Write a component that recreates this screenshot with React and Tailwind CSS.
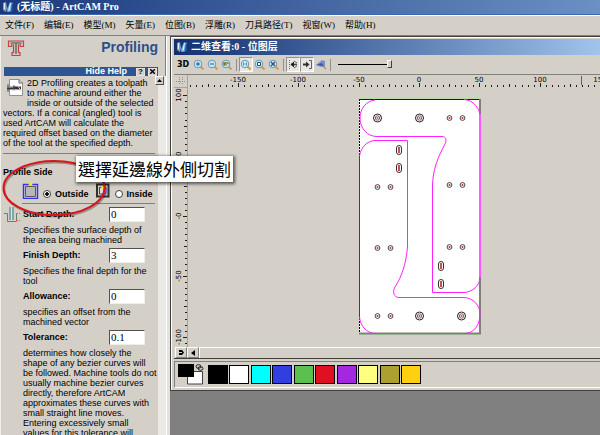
import React from 'react';

const MENU = ['文件(F)', '编辑(E)', '模型(M)', '矢量(E)', '位图(B)', '浮雕(R)', '刀具路径(T)', '视窗(W)', '帮助(H)'];

const SWATCHES = [
  ['Black', 'bg-black'],
  ['White', 'bg-white'],
  ['Cyan', 'bg-[#00ffff]'],
  ['Blue', 'bg-[#3040e0]'],
  ['Green', 'bg-[#5cc050]'],
  ['Red', 'bg-[#e01020]'],
  ['Purple', 'bg-[#a428e0]'],
  ['Light yellow', 'bg-[#ffff80]'],
  ['Olive', 'bg-[#aca030]'],
  ['Amber', 'bg-[#ffd010]'],
];

const FIELDS = [
  { id: 'start', label: 'Start Depth:', value: '0', lines: ['Specifies the surface depth of', 'the area being machined'] },
  { id: 'finish', label: 'Finish Depth:', value: '3', lines: ['Specifies the final depth for the', 'tool'] },
  { id: 'allowance', label: 'Allowance:', value: '0', lines: ['specifies an offset from the', 'machined vector'] },
  {
    id: 'tolerance',
    label: 'Tolerance:',
    value: '0.1',
    lines: [
      'determines how closely the',
      'shape of any bezier curves will',
      'be followed. Machine tools do not',
      'usually machine bezier curves',
      'directly, therefore ArtCAM',
      'approximates these curves with',
      'small straight line moves.',
      'Entering excessively small',
      'values for this tolerance will',
    ],
  },
];

const SERIF = "font-['Liberation_Serif','Noto_Sans_CJK_SC',serif]";

function AppIcon() {
  return (
    <svg width="12" height="12" viewBox="0 0 12 12" className="shrink-0" aria-hidden="true">
      <path d="M1 2 L4 1 L5 7 L4 11 L1 9 Z" fill="#8fa0b4" />
      <path d="M2 2 L3 2 L3 8 L2 8 Z" fill="#e4ecf4" />
      <path d="M5 8 L8 1 L11 2 L11 9 L8 11 L5 11 Z" fill="#4f9cd8" />
      <path d="M8 2 L9 2 L8 9 L6 10 Z" fill="#d8f0fc" />
      <path d="M10 3 L11 3 L11 9 L9 10 Z" fill="#1c4c8c" />
    </svg>
  );
}

function Lens({ kind }) {
  return (
    <svg width="12" height="12" viewBox="0 0 12 12" aria-hidden="true">
      <path d="M7.5 7.5 L10.5 10.5" stroke="#d89a38" strokeWidth="2" />
      <circle cx="5" cy="5" r="3.8" fill="#c4e8f6" stroke="#6898b8" strokeWidth="1" />
      {kind === 'in' && <path d="M3 5 H7 M5 3 V7" stroke="#1c5484" strokeWidth="1" />}
      {kind === 'out' && <path d="M3 5 H7" stroke="#1c5484" strokeWidth="1" />}
      {kind === 'prev' && <path d="M3 3 V6 H6 M3.3 5.5 Q5 2 7.5 5" fill="none" stroke="#806810" strokeWidth="1.2" />}
      {kind === 'one' && <path d="M3.5 3.5 V6.5 M6.5 3.5 V6.5 M5 4 V4.5 M5 5.5 V6" stroke="#3c7898" strokeWidth="0.8" />}
      {kind === 'box' && <path d="M3.5 3.5 H6.5 V6.5 H3.5 Z" fill="#fff" stroke="#28506c" strokeWidth="1" />}
      {kind === 'fit' && <path d="M3 3 L7 7 M7 3 L3 7" stroke="#28506c" strokeWidth="1.3" />}
    </svg>
  );
}

function ToolButton({ label, pressed, children }) {
  return (
    <button
      type="button"
      aria-label={label}
      className={
        pressed
          ? 'flex h-[15px] w-[14px] items-center justify-center border border-t-[#909090] border-l-[#909090] border-r-white border-b-white bg-[#e8e6e2]'
          : 'flex h-[15px] w-[14px] items-center justify-center'
      }
    >
      {children}
    </button>
  );
}

function Separator() {
  return <span className="mx-[2px] h-3 w-px shrink-0 bg-[#909090]" />;
}

function Toolbar() {
  return (
    <div className="flex h-[19px] shrink-0 items-center pl-[3px]">
      <button type="button" className="w-[15px] shrink-0 text-left font-['DejaVu_Sans',sans-serif] text-[8px] leading-none font-bold">
        3D
      </button>
      <ToolButton label="Zoom in"><Lens kind="in" /></ToolButton>
      <ToolButton label="Zoom out"><Lens kind="out" /></ToolButton>
      <ToolButton label="Previous zoom"><Lens kind="prev" /></ToolButton>
      <Separator />
      <ToolButton label="Zoom 1:1" pressed><Lens kind="one" /></ToolButton>
      <ToolButton label="Zoom to page"><Lens kind="box" /></ToolButton>
      <ToolButton label="Zoom to objects"><Lens kind="fit" /></ToolButton>
      <Separator />
      <ToolButton label="Bitmap on" pressed>
        <svg width="11" height="11" viewBox="0 0 11 11" aria-hidden="true">
          <path d="M1.5 1 V10" stroke="#707070" strokeDasharray="1 1" />
          <path d="M3 5.5 H9" stroke="#404040" strokeWidth="1.6" />
          <path d="M2.500 5.500 L6 2.500 V8.500 Z" fill="#202020" />
          <path d="M6 2 L9 4 M6 9 L9 7" stroke="#606060" />
        </svg>
      </ToolButton>
      <ToolButton label="Vectors on" pressed>
        <svg width="11" height="11" viewBox="0 0 11 11" aria-hidden="true">
          <path d="M1 4.500 H4 V2.500 L7.500 5.500 L4 8.500 V6.500 H1 Z" fill="#303030" />
          <path d="M7 1.5 H9.5 V9.5 H7" fill="none" stroke="#606060" />
        </svg>
      </ToolButton>
      <ToolButton label="Preview">
        <svg width="12" height="11" viewBox="0 0 12 11" aria-hidden="true">
          <path d="M1 6 L7 1 L10 2 V8 L6 8 Z" fill="#7890c8" />
          <path d="M1 6 L7 4 L9 7 Z" fill="#4058a0" />
          <path d="M8 7 L11 10" stroke="#c89040" strokeWidth="1.6" />
        </svg>
      </ToolButton>
      <Separator />
      <input
        type="range"
        aria-label="Bitmap contrast"
        defaultValue="100"
        className="ml-[5px] h-3 w-[54px] appearance-none bg-transparent [&::-webkit-slider-runnable-track]:h-px [&::-webkit-slider-runnable-track]:bg-black [&::-webkit-slider-thumb]:-mt-1 [&::-webkit-slider-thumb]:h-2 [&::-webkit-slider-thumb]:w-[5px] [&::-webkit-slider-thumb]:appearance-none [&::-webkit-slider-thumb]:border [&::-webkit-slider-thumb]:border-t-white [&::-webkit-slider-thumb]:border-l-white [&::-webkit-slider-thumb]:border-r-[#404040] [&::-webkit-slider-thumb]:border-b-[#404040] [&::-webkit-slider-thumb]:bg-[#d4d0c8]"
      />
    </div>
  );
}

const SCALE = 1.206;

function tickLength(n) {
  if (n % 10 === 0) return 4;
  return n % 5 === 0 ? 3 : 2;
}

function HorizontalRuler() {
  const ticks = [];
  for (let n = -38; n <= 30; n += 1) {
    const x = Math.round(419 + n * 5 * SCALE);
    if (x > 188) ticks.push([n, x]);
  }
  return (
    <svg width="412" height="13" viewBox="188 75 412 13" className="shrink-0" aria-hidden="true">
      {ticks.map(([n, x]) => (
        <rect key={n} x={x} y={87 - tickLength(n)} width="1" height={tickLength(n)} fill="#202020" />
      ))}
      {[-150, -100, -50, 0, 50, 100, 150].map((v) => (
        <text key={v} x={Math.round(419 + v * SCALE)} y="82" textAnchor="middle" className="font-['DejaVu_Sans',sans-serif] text-[7px]">
          {v}
        </text>
      ))}
      <rect x="581" y="76" width="1" height="9" fill="#606060" />
    </svg>
  );
}

function VerticalRuler() {
  const ticks = [];
  for (let n = -21; n <= 20; n += 1) ticks.push([n, Math.round(216 - n * 5 * SCALE)]);
  return (
    <svg width="13" height="259" viewBox="175 88 13 259" className="shrink-0" aria-hidden="true">
      {ticks.map(([n, y]) => (
        <rect key={n} x={187 - tickLength(n)} y={y} width={tickLength(n)} height="1" fill="#202020" />
      ))}
      {[100, 50, 0, -50, -100].map((v) => {
        const y = Math.round(216 - v * SCALE);
        return (
          <text key={v} x="181" y={y} transform={`rotate(-90 181 ${y})`} textAnchor="middle" className="font-['DejaVu_Sans',sans-serif] text-[7px]">
            {v === 0 ? '-0' : v}
          </text>
        );
      })}
      <rect x="187" y="88" width="1" height="259" fill="#a8a49c" />
    </svg>
  );
}

const SMALL_HOLES = [
  [449, 118], [462, 118], [377, 187], [390, 187], [449, 185], [462, 185],
  [377, 248], [390, 248], [449, 247], [462, 247], [377, 316], [390, 316],
];
const LARGE_HOLES = [[377, 118], [419, 118], [419, 316], [461, 316]];
const SLOTS = [[399, 150], [399, 168], [441, 266], [441, 284]];

function Workpiece() {
  return (
    <svg width="412" height="259" viewBox="188 88 412 259" role="img" aria-label="Part drawing">
      <rect x="359" y="98" width="122" height="237" fill="#b8dca8" />
      <rect x="359" y="99" width="122" height="235" fill="#fff" />
      <path d="M359.500 155 V317" stroke="#702070" />
      <path d="M359.500 99 V155 M359.500 318 V334" stroke="#000" strokeDasharray="2 1" />
      <path d="M359 99.500 H481" stroke="#301030" />
      <path d="M480 99 V114 M480 277 V334 M359 333.500 H481" stroke="#808080" strokeWidth="2" />
      <g fill="none" stroke="#ff20ff" strokeWidth="1">
        <path d="M375 100 C366 101 360 109 360 118 C360 128 367 136.500 377 136.500 H442 C446 136.500 447 140 445 144 C438 157 432.500 170 432.500 187 V292.500 H464 C473 292 480 285 480 277 V114 C478 106 472 100 464 99.500" />
        <path d="M359.500 156 C361 147 367 141 375 140.500 H407.500 V247 C406 264 402 276 395 287 C392 292 394 297.500 399 297.500 H464 C473 298 480 305 480 314 C480 325 474 333 465 333.500 H375 C366 333 360 325 359.500 317" />
        <path d="M480 114 V277" strokeWidth="2" strokeOpacity="0.5" />
      </g>
      {LARGE_HOLES.map(([x, y]) => (
        <g key={`${x}-${y}`} fill="none">
          <circle cx={x + 0.5} cy={y} r="4" stroke="#202020" />
          <circle cx={x + 0.5} cy={y} r="2.2" stroke="#703040" strokeWidth="0.8" />
          <circle cx={x + 0.5} cy={y} r="1" fill="#e04040" />
        </g>
      ))}
      {SMALL_HOLES.map(([x, y]) => (
        <g key={`${x}-${y}`}>
          <circle cx={x + 0.5} cy={y} r="2.4" fill="#fff" stroke="#303030" strokeWidth="0.9" />
          <circle cx={x + 0.5} cy={y} r="1" fill="#c03030" />
        </g>
      ))}
      {SLOTS.map(([x, y]) => (
        <g key={`${x}-${y}`}>
          <rect x={x - 2.5} y={y - 4.5} width="5" height="9" rx="2.5" fill="#fff" stroke="#303030" />
          <rect x={x - 1} y={y - 3} width="2" height="6" fill="#c85050" />
        </g>
      ))}
    </svg>
  );
}

function Palette() {
  return (
    <div className="mt-[2px] mr-[-4px] flex h-[27px] shrink-0 items-center border border-[#808080] border-b-white pl-[3px]">
      <svg width="26" height="21" viewBox="0 0 26 21" className="mr-1 shrink-0" role="img" aria-label="Primary and secondary colour">
        <path d="M9.500 7.500 H24.500 V20 H9.500 Z" fill="#fff" stroke="#404040" />
        <rect x="0" y="0" width="16" height="13" fill="#000" />
        <rect x="17" y="0" width="9" height="7" fill="#d4d0c8" />
        <ellipse cx="20.500" cy="2.500" rx="2.500" ry="1.800" fill="none" stroke="#202020" />
        <ellipse cx="22.500" cy="4.500" rx="2.500" ry="1.800" fill="none" stroke="#202020" />
      </svg>
      <div className="flex w-[213px] justify-between">
        {SWATCHES.map(([name, color]) => (
          <button key={name} type="button" aria-label={name} className={`h-[19px] w-5 border border-black ${color}`} />
        ))}
      </div>
    </div>
  );
}

function ViewWindow() {
  return (
    <section className="flex min-w-0 flex-1 flex-col bg-[#808080]">
      <div className="flex h-[355px] shrink-0 flex-col overflow-hidden border-t border-b border-l border-[#404040] bg-[#d4d0c8] pt-[2px] pl-[3px] shadow-[inset_1px_1px_0_#fff]">
        <div className="flex h-4 shrink-0 items-center gap-[3px] bg-linear-to-r from-[#12306f] to-[#a0c4ec] pl-[2px]">
          <AppIcon />
          <h2 className={`text-[10px] leading-none font-bold whitespace-nowrap text-white ${SERIF}`}>二维查看:0 - 位图层</h2>
        </div>
        <Toolbar />
        <div className="flex h-[14px] shrink-0 border-t border-[#808080]">
          <div className="flex h-[13px] w-[14px] shrink-0 items-center justify-center border-r border-b border-[#a8a49c]">
            <svg width="9" height="8" viewBox="0 0 9 8" aria-hidden="true">
              <path d="M0 4.500 H9 M3.500 0 V8 M6.500 0 V8" stroke="#909090" strokeDasharray="1 1" />
            </svg>
          </div>
          <HorizontalRuler />
        </div>
        <div className="flex h-[259px] shrink-0 pl-px">
          <VerticalRuler />
          <Workpiece />
        </div>
        <div className="flex h-3 shrink-0 border-b border-[#404040] pl-px">
          <button type="button" aria-label="Origin" className="flex h-[11px] w-3 items-center justify-center border border-[#808080] border-t-white border-l-white">
            <svg width="5" height="5" viewBox="0 0 5 5" aria-hidden="true"><path d="M0 0 H3 L5 2.500 L3 5 H0 V3 H3 V2 H0 Z" /></svg>
          </button>
          <button type="button" aria-label="Scroll left" className="flex h-[11px] w-3 items-center justify-center border border-[#808080] border-t-white border-l-white">
            <svg width="4" height="6" viewBox="0 0 4 6" aria-hidden="true"><path d="M4 0 V6 L0 3 Z" /></svg>
          </button>
          <div className="h-[11px] flex-1 border-t border-l border-white" />
        </div>
        <Palette />
      </div>
    </section>
  );
}

function SideIcon({ inside }) {
  return (
    <svg width="17" height="17" viewBox="0 0 17 17" className="shrink-0" aria-hidden="true">
      {inside ? (
        <>
          <path d="M3 2.500 H14.500 V14.500 H3 Z" fill="#d4d0c8" stroke="#303030" strokeWidth="2" />
          <path d="M5.500 5.500 H12 V12 H5.500 Z" fill="#e0e0e4" stroke="#3030e8" />
          <circle cx="9" cy="6" r="2" fill="#f8e820" />
        </>
      ) : (
        <>
          <path d="M1.500 2.500 H15.500 V16.500 H1.500 Z" fill="#d4d0c8" stroke="#3030ff" strokeWidth="1.400" />
          <path d="M3.500 4.500 H13.500 V14.500 H3.500 Z" fill="#b8b8b8" stroke="#585858" />
          <circle cx="8.500" cy="2" r="2" fill="#f0e820" />
        </>
      )}
    </svg>
  );
}

const RADIO =
  "m-0 mb-px h-2 w-2 shrink-0 appearance-none rounded-full border border-[#404040] bg-white checked:bg-[radial-gradient(circle,#000_0_1.5px,#fff_2px)]";

function ProfilingPanel() {
  return (
    <aside className="relative flex w-[166px] shrink-0 border-r border-[#808080] font-['Liberation_Sans',Arial,sans-serif] text-[9px] leading-[10px] text-black">
      <div className="flex w-[158px] shrink-0 flex-col border-l border-[#f0eeea]">
        <header className="flex h-[31px] shrink-0 items-start justify-between pt-[3px] pl-[6px]">
          <svg width="18" height="18" viewBox="0 0 18 18" aria-hidden="true">
            <path d="M1.500 2 H16.500 V7.500 H13.500 V6 H11.500 V13.500 H13 V16.500 H5 V13.500 H6.500 V6 H4.500 V7.500 H1.500 Z" fill="#c8c8c8" stroke="#c84040" strokeWidth="1.2" />
            <path d="M3.500 4 H14.500 M9 4 V15" stroke="#707070" strokeWidth="1.600" />
          </svg>
          <h1 className="text-[14px] leading-4 font-bold text-[#2b4f8c]">Profiling</h1>
        </header>
        <div className="ml-[3px] flex h-[9px] shrink-0 items-center justify-end bg-[#2d5594] leading-none font-bold text-white">
          <span className="mr-[9px]">Hide Help</span>
          <button type="button" aria-label="Help" className="mr-[3px] flex h-2 w-[9px] items-center justify-center border border-[#e4e2dc] bg-[#d4d0c8] text-[8px] leading-none text-black">?</button>
          <button type="button" aria-label="Close" className="mr-px flex h-2 w-[9px] items-center justify-center border border-[#e4e2dc] bg-[#d4d0c8]">
            <svg width="5" height="5" viewBox="0 0 5 5" aria-hidden="true"><path d="M0 0 L5 5 M5 0 L0 5" stroke="#000" strokeWidth="1.300" /></svg>
          </button>
        </div>
        <div className="mt-[2px] px-[2px] whitespace-nowrap">
          <div className="flex">
            <svg width="20" height="20" viewBox="0 0 20 20" className="mr-1 shrink-0" aria-hidden="true">
              <path d="M6.500 1.500 H16 L19.500 5 V17.500 H6.500 Z" fill="#fff" stroke="#909090" />
              <path d="M16 1.500 V5 H19.500" fill="none" stroke="#606060" />
              <path d="M4 10 H18" stroke="#303030" strokeWidth="3" />
              <path d="M4 9 H10 M8 12 H14 M15 8 L18 13" stroke="#d0d0d0" />
              <path d="M5 6 V14 M11 7 V12" stroke="#505050" />
            </svg>
            <p>2D Profiling creates a toolpath<br />to machine around either the<br />inside or outside of the selected</p>
          </div>
          <p>vectors. If a conical (angled) tool is<br />used ArtCAM will calculate the<br />required offset based on the diameter<br />of the tool at the specified depth.</p>
        </div>
        <hr className="mt-[5px] mr-[3px] ml-[2px] border-[#808080]" />
        <fieldset className="mt-[13px] shrink-0 pl-[2px]">
          <legend className="font-bold">Profile Side</legend>
          <div className="mt-1 flex h-[18px] items-end font-bold">
            <div className="ml-[19px] flex items-end gap-1">
              <SideIcon />
              <input id="outside" type="radio" name="side" defaultChecked className={RADIO} />
              <label htmlFor="outside">Outside</label>
            </div>
            <div className="ml-[5px] flex items-end gap-1">
              <SideIcon inside />
              <input id="inside" type="radio" name="side" className={RADIO} />
              <label htmlFor="inside">Inside</label>
            </div>
          </div>
        </fieldset>
        <hr className="mt-1 mr-[3px] ml-[21px] shrink-0 border-[#808080]" />
        <div className="flex pl-[3px]">
          <svg width="16" height="17" viewBox="0 0 16 17" className="mt-[3px] mr-[3px] shrink-0" aria-hidden="true">
            <path d="M0 6.500 H3.500 V14.500 H12.500 V6.500" fill="none" stroke="#707878" />
            <path d="M5 0 H10 V13 H5 Z" fill="#78a8a8" />
            <path d="M7.500 0 V13" stroke="#d8e8e8" />
            <path d="M12 6.500 H16 M12 13.500 H16" stroke="#e06060" strokeDasharray="2 1" />
          </svg>
          <div className="shrink-0 whitespace-nowrap">
            {FIELDS.map((f) => (
              <div key={f.id}>
                <div className="flex h-5 items-center">
                  <label htmlFor={f.id} className="w-[86px] font-bold">{f.label}</label>
                  <input
                    id={f.id}
                    type="text"
                    defaultValue={f.value}
                    className="h-[15px] w-9 border border-t-[#505050] border-l-[#505050] border-r-[#f0eeea] border-b-[#f0eeea] bg-white px-px font-['Liberation_Serif',serif] text-[11px] leading-none"
                  />
                </div>
                <p className="mt-px">
                  {f.lines.map((line) => (
                    <span key={line} className="block">{line}</span>
                  ))}
                </p>
              </div>
            ))}
          </div>
        </div>
      </div>
      <div className="mt-10 mr-[-3px] flex w-2 shrink-0 flex-col bg-[#ebe9e5]">
        <button type="button" aria-label="Scroll up" className="-ml-[3px] flex h-[9px] w-[9px] items-center justify-center border border-t-white border-r-[#505050] border-b-[#505050] border-l-white bg-[#d4d0c8]">
          <svg width="5" height="3" viewBox="0 0 5 3" aria-hidden="true"><path d="M0 3 H5 L2.500 0 Z" /></svg>
        </button>
      </div>
      <svg width="108" height="62" viewBox="0 0 108 62" className="pointer-events-none absolute top-[121px] left-0" aria-hidden="true">
        <ellipse cx="55" cy="32.500" rx="50.500" ry="27" fill="none" stroke="#000" strokeOpacity="0.3" strokeWidth="2" />
        <ellipse cx="54" cy="31" rx="50.500" ry="27" fill="none" stroke="#dc1418" strokeWidth="2" />
      </svg>
      <p className="absolute top-[120px] left-[76px] z-10 bg-white px-[2px] font-['Noto_Sans_CJK_TC',sans-serif] text-[17px] leading-[26px] whitespace-nowrap shadow-[1px_1px_3px_1px_rgba(0,0,0,0.6)]">
        選擇延邊線外側切割
      </p>
    </aside>
  );
}

export default function App() {
  return (
    <div className="flex h-screen flex-col overflow-hidden bg-[#d4d0c8]">
      <header className="flex h-[15px] shrink-0 items-center gap-[3px] border-b border-[#3c66b0] bg-linear-to-r from-[#1c387c] to-[#6c90c4] pl-[2px]">
        <AppIcon />
        <span className={`text-[10px] leading-none font-bold whitespace-nowrap text-white ${SERIF}`}>(无标题) - ArtCAM Pro</span>
      </header>
      <nav className={`flex h-[20px] shrink-0 items-center gap-[10px] border-t border-white pl-[5px] text-[9px] leading-none whitespace-nowrap text-black ${SERIF}`}>
        {MENU.map((m) => (
          <button key={m} type="button">{m}</button>
        ))}
      </nav>
      <main className="flex min-h-0 flex-1 border-t border-[#808080]">
        <ProfilingPanel />
        <div className="w-1 shrink-0 border-l border-white bg-[#e4e2dc]" />
        <ViewWindow />
      </main>
    </div>
  );
}
